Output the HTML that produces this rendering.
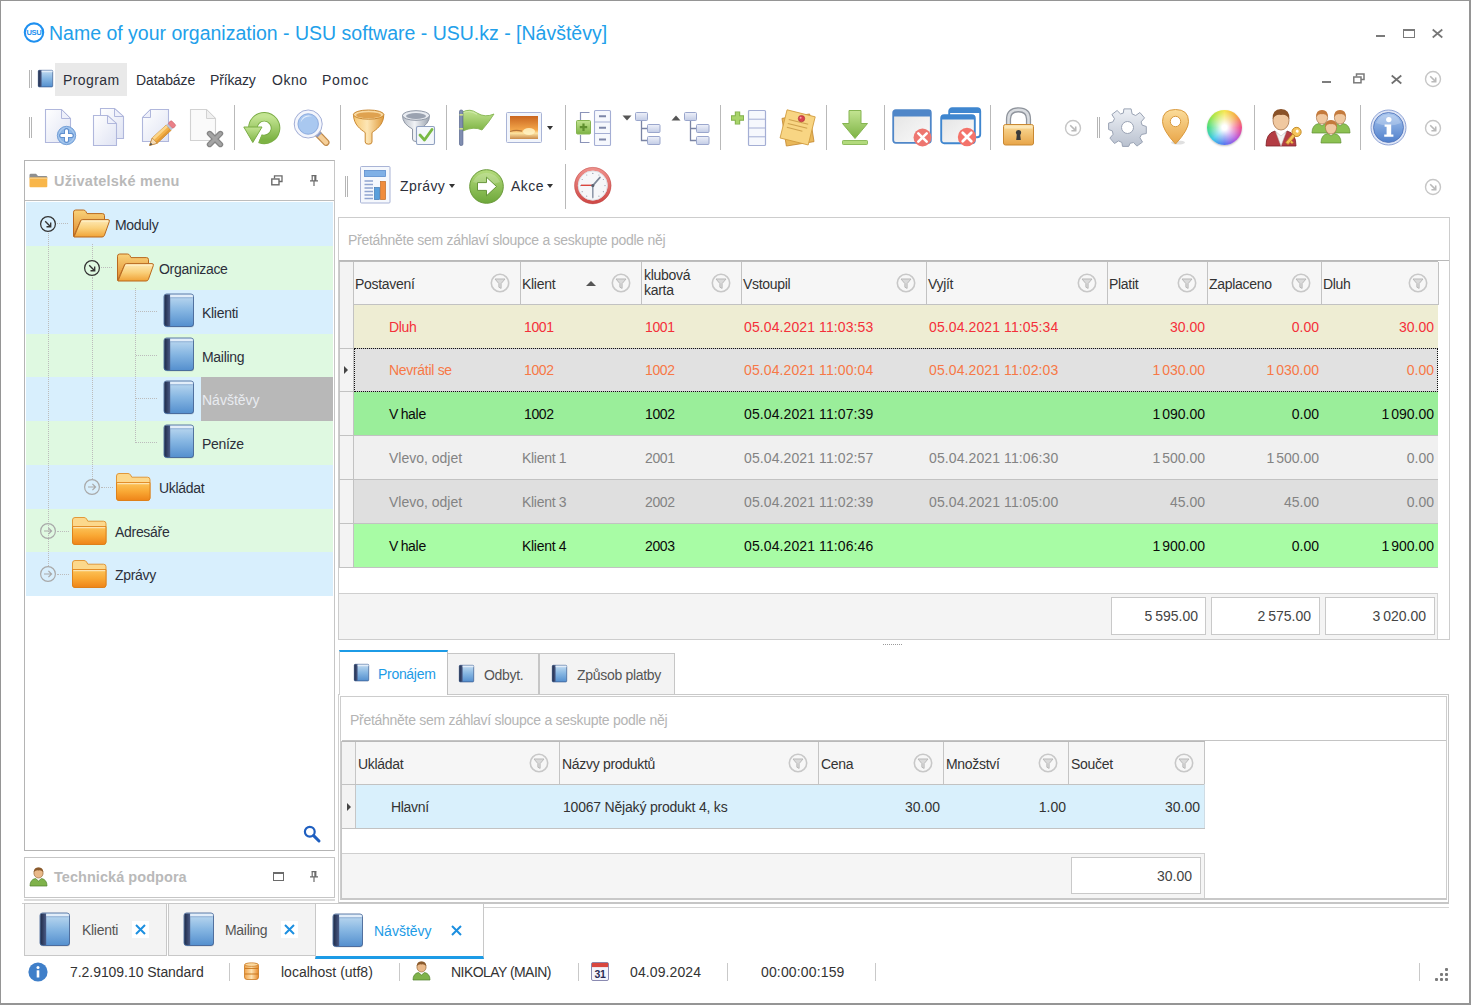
<!DOCTYPE html>
<html><head><meta charset="utf-8"><title>USU</title>
<style>
*{box-sizing:border-box;margin:0;padding:0}
html,body{width:1471px;height:1005px;overflow:hidden;background:#fff}
body{font-family:"Liberation Sans",sans-serif;font-size:14px;color:#2c2f3a;position:relative;letter-spacing:-0.3px}
.a{position:absolute}
.t{position:absolute;white-space:nowrap;line-height:16px;height:16px}
.n{letter-spacing:0}
.r{text-align:right}
.box{position:absolute;border:1px solid #c4c4c4}
.vsep{position:absolute;width:1px;background:#b9b9b9}
.grip{position:absolute;width:3px;border-left:1px solid #b5b5b5;border-right:1px solid #b5b5b5}
svg{position:absolute;overflow:visible}
.hd{position:absolute;background:#f6f6f6;border-right:1px solid #c8c8c8}
.gray{color:#838383}.red{color:#f4303a}.org{color:#f77846}.blk{color:#0a0a0a}
.dv{position:absolute;width:0;border-left:1px dotted #bcbcbc}
.dh{position:absolute;height:0;border-top:1px dotted #bcbcbc}
</style></head><body>
<svg width="0" height="0" style="left:0;top:0">
<defs>
<linearGradient id="gBookC" x1="0" y1="0" x2="0" y2="1"><stop offset="0" stop-color="#c2dcf1"/><stop offset="0.5" stop-color="#86b6e2"/><stop offset="1" stop-color="#548fce"/></linearGradient>
<linearGradient id="gBookS" x1="0" y1="0" x2="1" y2="0"><stop offset="0" stop-color="#1f2b49"/><stop offset="1" stop-color="#4a5b86"/></linearGradient>
<linearGradient id="gFoldB" x1="0" y1="0" x2="0" y2="1"><stop offset="0" stop-color="#f9d27a"/><stop offset="1" stop-color="#e08a2c"/></linearGradient>
<linearGradient id="gFoldF" x1="0" y1="0" x2="0" y2="1"><stop offset="0" stop-color="#feeab8"/><stop offset="0.5" stop-color="#fad07a"/><stop offset="1" stop-color="#f0a236"/></linearGradient>
<linearGradient id="gFoldC" x1="0" y1="0" x2="0" y2="1"><stop offset="0" stop-color="#fcc45a"/><stop offset="0.5" stop-color="#f9a834"/><stop offset="1" stop-color="#ee8418"/></linearGradient>
<linearGradient id="gPage" x1="0" y1="0" x2="1" y2="1"><stop offset="0" stop-color="#ffffff"/><stop offset="1" stop-color="#dfe3f3"/></linearGradient>
<linearGradient id="gGreen" x1="0" y1="0" x2="0" y2="1"><stop offset="0" stop-color="#b5dc7c"/><stop offset="1" stop-color="#6da73a"/></linearGradient>
<linearGradient id="gGold" x1="0" y1="0" x2="1" y2="0"><stop offset="0" stop-color="#f7c873"/><stop offset="0.45" stop-color="#fde6b5"/><stop offset="1" stop-color="#e09a3a"/></linearGradient>
<linearGradient id="gSilver" x1="0" y1="0" x2="1" y2="0"><stop offset="0" stop-color="#b8bec8"/><stop offset="0.45" stop-color="#f1f3f6"/><stop offset="1" stop-color="#9aa2ae"/></linearGradient>
<linearGradient id="gBlueBall" x1="0" y1="0" x2="0" y2="1"><stop offset="0" stop-color="#a9c6ee"/><stop offset="1" stop-color="#4f7fcb"/></linearGradient>
<linearGradient id="gLock" x1="0" y1="0" x2="0" y2="1"><stop offset="0" stop-color="#fbdc9a"/><stop offset="1" stop-color="#e8a548"/></linearGradient>
<linearGradient id="gSunset" x1="0" y1="0" x2="0" y2="1"><stop offset="0" stop-color="#c9651f"/><stop offset="0.6" stop-color="#f3a64a"/><stop offset="0.75" stop-color="#fde3a0"/><stop offset="1" stop-color="#c98a4a"/></linearGradient>
<linearGradient id="gWin" x1="0" y1="0" x2="1" y2="1"><stop offset="0" stop-color="#e3e3e3"/><stop offset="1" stop-color="#fbfbfb"/></linearGradient>
<linearGradient id="gGear" x1="0" y1="0" x2="0" y2="1"><stop offset="0" stop-color="#eef1f6"/><stop offset="1" stop-color="#b9c1cf"/></linearGradient>
<linearGradient id="gRedRing" x1="0" y1="0" x2="0" y2="1"><stop offset="0" stop-color="#ee8f8a"/><stop offset="1" stop-color="#cf4a48"/></linearGradient>

<!-- book 30x33 -->
<g id="book">
 <rect x="1" y="1.5" width="29" height="32" rx="2.5" fill="#000" opacity="0.13"/>
 <rect x="0" y="0" width="29.5" height="32.5" rx="2.5" fill="url(#gBookC)" stroke="#3a5a8f" stroke-width="0.8"/>
 <path d="M2.5 0.4 H6.2 V32.1 H2.5 A2.1 2.1 0 0 1 0.4 30 V2.5 A2.1 2.1 0 0 1 2.5 0.4Z" fill="url(#gBookS)"/>
 <rect x="6.2" y="0.8" width="22.5" height="2.6" fill="#e9f1fa" opacity="0.85"/>
 <rect x="6.2" y="3.4" width="22.5" height="0.8" fill="#5f86b8" opacity="0.6"/>
</g>
<!-- small book 15x17 -->
<g id="sbook">
 <rect x="0.3" y="0.3" width="14.4" height="16.6" rx="0.8" fill="url(#gBookC)" stroke="#3a5a8f" stroke-width="0.7"/>
 <path d="M1.3 0.3 H3.6 V16.7 H1.3 A1 1 0 0 1 0.3 15.7 V1.3 A1 1 0 0 1 1.3 0.3Z" fill="url(#gBookS)"/>
 <rect x="3.6" y="0.6" width="11" height="1.6" fill="#e9f1fa" opacity="0.85"/>
</g>
<!-- open folder 38x29 -->
<g id="ofold">
 <path d="M1.5 27.5 V3.2 Q1.5 1 3.7 1 H11.5 Q13 1 13.8 2.4 L15 4.6 H30.5 Q32.5 4.6 32.5 6.6 V11 H9 L1.5 27.5Z" fill="url(#gFoldB)" stroke="#b9691f" stroke-width="1"/>
 <path d="M2 28 L8.6 12 Q9.2 10.6 10.8 10.6 H36 Q38 10.6 37.3 12.6 L32.4 26.4 Q31.8 28 30 28Z" fill="url(#gFoldF)" stroke="#b9691f" stroke-width="1"/>
 <path d="M9.5 12.2 H36" stroke="#fff3d0" stroke-width="1" opacity="0.8" fill="none"/>
</g>
<!-- closed folder 35x28 -->
<g id="cfold">
 <path d="M0.5 25 V3 Q0.5 0.5 3 0.5 H12 Q13.8 0.5 14.6 2 L15.8 4.2 H31.5 Q34 4.2 34 6.7 V25 Q34 27.5 31.5 27.5 H3 Q0.5 27.5 0.5 25Z" fill="#fcd88c" stroke="#e0902a" stroke-width="0.9"/>
 <path d="M0.5 9.6 H34 V25 Q34 27.5 31.5 27.5 H3 Q0.5 27.5 0.5 25Z" fill="url(#gFoldC)" stroke="#dd7f18" stroke-width="0.9"/>
 <path d="M1.3 10.6 H33.2" stroke="#fee6b4" stroke-width="1.1" opacity="0.95"/>
</g>
<!-- expand circle (arrow down-right) r=8 -->
<g id="exOpen" fill="none" stroke="#333" stroke-width="1.25">
 <circle cx="0" cy="0" r="7.4"/>
 <path d="M-2.8 -2.8 L2.4 2.4 M2.7 -1.5 V2.7 H-1.5" stroke-width="1.35"/>
</g>
<g id="exClosed" fill="none" stroke="#a9a9a9" stroke-width="1.2">
 <circle cx="0" cy="0" r="7.4"/>
 <path d="M-4 0 H3.4 M0.4 -3.2 L3.6 0 L0.4 3.2"/>
</g>
<!-- filter button r=8.5 -->
<g id="filt">
 <circle cx="0" cy="0" r="8.7" fill="#f7f7f7" stroke="#c8c8c8" stroke-width="1.6"/>
 <path d="M-5 -4 H5 L1.1 0.6 V5.4 L-1.1 4.2 V0.6Z" fill="#dadada" stroke="#b9b9b9" stroke-width="1" stroke-linejoin="round"/>
</g>
<!-- overflow circle arrow -->
<g id="ovf" fill="none" stroke="#c6c6c6" stroke-width="1.4">
 <circle cx="0" cy="0" r="7.5"/>
 <path d="M-2.8 -2.8 L2.4 2.4 M2.7 -1.6 V2.7 H-1.6" stroke="#bababa" stroke-width="1.6"/>
</g>
</defs></svg>
<!-- window frame -->
<div class="a" style="left:0;top:0;width:1471px;height:1005px;border:1px solid #959595;border-right-width:2px;border-bottom-width:2px"></div>

<!-- TITLE -->
<svg style="left:23px;top:22px" width="22" height="22" viewBox="0 0 22 22">
 <circle cx="11" cy="10.6" r="9.2" fill="#fff" stroke="#1e90f0" stroke-width="2.1"/>
 <text x="11" y="13.4" text-anchor="middle" font-family="Liberation Sans" font-weight="bold" font-size="7.6" fill="#1e90f0" letter-spacing="-0.3">USU</text>
</svg>
<div id="title" class="t n" style="left:49px;top:21px;font-size:19.5px;line-height:24px;height:24px;color:#22a0ea">Name of your organization - USU software - USU.kz - [Návštěvy]</div>
<!-- window controls -->
<div class="a" style="left:1376px;top:35px;width:9px;height:2px;background:#7a7a7a"></div>
<div class="a" style="left:1403px;top:29px;width:12px;height:9px;border:1px solid #7a7a7a;border-top-width:2px"></div>
<svg style="left:1432px;top:29px" width="11" height="9"><path d="M0.7 0.5 L10.3 8.5 M10.3 0.5 L0.7 8.5" stroke="#777" stroke-width="1.7"/></svg>

<!-- MENU -->
<div class="grip" style="left:29px;top:70px;height:18px"></div>
<svg style="left:38px;top:70px" width="16" height="18"><use href="#sbook"/></svg>
<div class="a" style="left:55px;top:63px;width:72px;height:33px;background:#e9e9e9"></div>
<div class="t" style="left:63px;top:72px;letter-spacing:0.4px">Program</div>
<div class="t" style="left:136px;top:72px;letter-spacing:-0.1px">Databáze</div>
<div class="t" style="left:210px;top:72px;letter-spacing:-0.15px">Příkazy</div>
<div class="t" style="left:272px;top:72px;letter-spacing:0.5px">Okno</div>
<div class="t" style="left:322px;top:72px;letter-spacing:0.75px">Pomoc</div>
<!-- mdi controls -->
<div class="a" style="left:1322px;top:81px;width:9px;height:2px;background:#7d7d7d"></div>
<svg style="left:1353px;top:73px" width="12" height="12" fill="none" stroke="#7a7a7a" stroke-width="1.5"><path d="M3.5 3.5 V0.9 H11 V6.5 H8"/><rect x="0.8" y="4" width="7.2" height="5.8" stroke-width="1.5"/></svg>
<svg style="left:1391px;top:75px" width="11" height="9"><path d="M0.7 0.5 L10.3 8.5 M10.3 0.5 L0.7 8.5" stroke="#707070" stroke-width="1.7"/></svg>
<svg style="left:1433px;top:79px" width="1" height="1"><use href="#ovf"/></svg>
<svg style="left:1433px;top:128px" width="1" height="1"><use href="#ovf"/></svg>
<svg style="left:1433px;top:187px" width="1" height="1"><use href="#ovf"/></svg>
<svg style="left:1073px;top:128px" width="1" height="1"><use href="#ovf"/></svg>

<!-- TOOLBAR 1 separators -->
<div class="grip" style="left:29px;top:117px;height:21px"></div>
<div class="vsep" style="left:234px;top:105px;height:45px"></div>
<div class="vsep" style="left:340px;top:105px;height:45px"></div>
<div class="vsep" style="left:446px;top:105px;height:45px"></div>
<div class="vsep" style="left:565px;top:105px;height:45px"></div>
<div class="vsep" style="left:720px;top:105px;height:45px"></div>
<div class="vsep" style="left:826px;top:105px;height:45px"></div>
<div class="vsep" style="left:884px;top:105px;height:45px"></div>
<div class="vsep" style="left:990px;top:105px;height:45px"></div>
<div class="grip" style="left:1097px;top:117px;height:21px"></div>
<div class="vsep" style="left:1254px;top:105px;height:45px"></div>
<div class="vsep" style="left:1360px;top:105px;height:45px"></div>

<!-- TOOLBAR 2 -->
<div class="grip" style="left:345px;top:176px;height:21px"></div>
<div class="t" style="left:400px;top:178px;letter-spacing:0.4px">Zprávy</div>
<div class="a" style="left:449px;top:184px;border:3.5px solid transparent;border-top:4px solid #333;border-bottom:0"></div>
<div class="t" style="left:511px;top:178px;letter-spacing:0.5px">Akce</div>
<div class="a" style="left:547px;top:184px;border:3.5px solid transparent;border-top:4px solid #333;border-bottom:0"></div>
<div class="vsep" style="left:565px;top:164px;height:45px"></div>
<!-- LEFT PANEL -->
<div class="box" style="left:24px;top:160px;width:311px;height:691px;border-color:#b4b4b4;border-right-color:#c6c6c6"></div>
<div class="a" style="left:25px;top:200px;width:309px;height:1px;background:#bdbdbd"></div>
<svg style="left:29px;top:173px" width="19" height="15"><path d="M0.5 2.2 Q0.5 0.8 1.9 0.8 H7 L9 3 H17 Q18.3 3 18.3 4.3 V5 H0.5Z" fill="#8f8f8f"/><rect x="0.5" y="4.6" width="17.8" height="9.6" rx="1" fill="#f8b64a"/><rect x="0.5" y="4.6" width="17.8" height="1.2" fill="#fbd28a"/></svg>
<div class="t" style="left:54px;top:173px;font-weight:bold;font-size:14.5px;color:#b9b9b9;letter-spacing:0.25px">Uživatelské menu</div>
<svg style="left:271px;top:175px" width="12" height="12" fill="none" stroke="#6b6b6b" stroke-width="1.3"><path d="M3.5 3.5 V0.9 H11 V6.5 H8"/><rect x="0.8" y="4" width="7.2" height="5.8" stroke-width="1.4"/></svg>
<svg style="left:309px;top:175px" width="10" height="12"><path d="M2.5 0.6 H7.5 M3.2 0.6 V5.6 M6.8 0.6 V5.6 M5.9 0.6 V5.6 M1 5.9 H9 M5 6 V11" fill="none" stroke="#6b6b6b" stroke-width="1.2"/></svg>
<div class="a" style="left:26px;top:202px;width:307px;height:44px;background:#d8effd"></div>
<div class="a" style="left:26px;top:246px;width:307px;height:44px;background:#dff9e1"></div>
<div class="a" style="left:26px;top:290px;width:307px;height:44px;background:#d8effd"></div>
<div class="a" style="left:26px;top:334px;width:307px;height:43px;background:#dff9e1"></div>
<div class="a" style="left:26px;top:377px;width:307px;height:44px;background:#d8effd"></div>
<div class="a" style="left:26px;top:421px;width:307px;height:44px;background:#dff9e1"></div>
<div class="a" style="left:26px;top:465px;width:307px;height:44px;background:#d8effd"></div>
<div class="a" style="left:26px;top:509px;width:307px;height:43px;background:#dff9e1"></div>
<div class="a" style="left:26px;top:552px;width:307px;height:44px;background:#d8effd"></div>
<div class="dv" style="left:48px;top:233px;height:333px"></div>
<div class="dv" style="left:92px;top:277px;height:202px"></div>
<div class="dv" style="left:135px;top:288px;height:155px"></div>
<div class="dv" style="left:92px;top:244px;height:15px"></div>
<div class="dh" style="left:136px;top:311px;width:21px"></div>
<div class="dh" style="left:136px;top:355px;width:21px"></div>
<div class="dh" style="left:136px;top:398px;width:21px"></div>
<div class="dh" style="left:136px;top:442px;width:21px"></div>
<div class="dh" style="left:57px;top:223px;width:11px"></div>
<div class="dh" style="left:101px;top:267px;width:11px"></div>
<div class="dh" style="left:101px;top:487px;width:12px"></div>
<div class="dh" style="left:57px;top:531px;width:12px"></div>
<div class="dh" style="left:57px;top:574px;width:12px"></div>
<svg style="left:48px;top:224px" width="1" height="1"><use href="#exOpen"/></svg>
<svg style="left:72px;top:209px" width="38" height="29"><use href="#ofold"/></svg>
<div class="t" style="left:115px;top:217px">Moduly</div>
<svg style="left:92px;top:268px" width="1" height="1"><use href="#exOpen"/></svg>
<svg style="left:116px;top:253px" width="38" height="29"><use href="#ofold"/></svg>
<div class="t" style="left:159px;top:261px">Organizace</div>
<div class="t" style="left:202px;top:305px">Klienti</div>
<svg style="left:164px;top:294px" width="31" height="34"><use href="#book"/></svg>
<div class="t" style="left:202px;top:349px">Mailing</div>
<svg style="left:164px;top:338px" width="31" height="34"><use href="#book"/></svg>
<div class="a" style="left:201px;top:377px;width:132px;height:44px;background:#b8b8b8"></div>
<div class="t" style="left:202px;top:392px;color:#e8ebf0;letter-spacing:0">Návštěvy</div>
<svg style="left:164px;top:381px" width="31" height="34"><use href="#book"/></svg>
<div class="t" style="left:202px;top:436px">Peníze</div>
<svg style="left:164px;top:425px" width="31" height="34"><use href="#book"/></svg>
<svg style="left:92px;top:487px" width="1" height="1"><use href="#exClosed"/></svg>
<svg style="left:116px;top:473px" width="35" height="28"><use href="#cfold"/></svg>
<div class="t" style="left:159px;top:480px">Ukládat</div>
<svg style="left:48px;top:531px" width="1" height="1"><use href="#exClosed"/></svg>
<svg style="left:72px;top:517px" width="35" height="28"><use href="#cfold"/></svg>
<div class="t" style="left:115px;top:524px">Adresáře</div>
<svg style="left:48px;top:574px" width="1" height="1"><use href="#exClosed"/></svg>
<svg style="left:72px;top:560px" width="35" height="28"><use href="#cfold"/></svg>
<div class="t" style="left:115px;top:567px">Zprávy</div>
<svg style="left:303px;top:825px" width="18" height="18"><circle cx="6.8" cy="6.8" r="4.9" fill="none" stroke="#1f5fc0" stroke-width="2.2"/><path d="M10.6 10.6 L16 16" stroke="#1f5fc0" stroke-width="3" stroke-linecap="round"/></svg>
<div class="box" style="left:24px;top:857px;width:311px;height:41px;border-color:#c6c6c6"></div>
<div class="a" style="left:24px;top:899px;width:311px;height:2px;background:#dcdcdc"></div>
<svg style="left:29px;top:867px" width="19" height="20"><ellipse cx="9.5" cy="6" rx="4.6" ry="5" fill="#e9b98a" stroke="#9a6a3a" stroke-width="0.7"/><path d="M4.7 5 Q5 0.6 9.5 0.6 Q14 0.6 14.3 5 Q12 2.8 9.5 3.4 Q7 2.8 4.7 5Z" fill="#8a5a2c"/><path d="M1 19 Q1 12.5 6.5 11.5 L9.5 14 L12.5 11.5 Q18 12.5 18 19Z" fill="#7fb24a" stroke="#4f7f2a" stroke-width="0.7"/></svg>
<div class="t" style="left:54px;top:869px;font-weight:bold;font-size:14.5px;color:#b9b9b9;letter-spacing:0.05px">Technická podpora</div>
<div class="a" style="left:273px;top:872px;width:11px;height:9px;border:1px solid #6b6b6b;border-top-width:2px"></div>
<svg style="left:309px;top:871px" width="10" height="12"><path d="M2.5 0.6 H7.5 M3.2 0.6 V5.6 M6.8 0.6 V5.6 M5.9 0.6 V5.6 M1 5.9 H9 M5 6 V11" fill="none" stroke="#6b6b6b" stroke-width="1.2"/></svg>
<!-- MAIN GRID -->
<div class="box" style="left:338px;top:217px;width:1112px;height:423px;border-color:#cdcdcd"></div>
<div class="t" style="left:348px;top:232px;color:#b4b4b4;letter-spacing:-0.28px">Přetáhněte sem záhlaví sloupce a seskupte podle něj</div>
<div class="a" style="left:339px;top:260px;width:1110px;height:1px;background:#b9b9b9"></div>
<div class="a" style="left:339px;top:261px;width:1099px;height:1px;background:#bdbdbd"></div>
<div class="a" style="left:339px;top:262px;width:1100px;height:43px;background:#f6f6f6;border-bottom:1px solid #c2c2c2"></div>
<div class="a" style="left:340px;top:262px;width:14px;height:305px;background:#f3f3f3;border-right:1px solid #c2c2c2"></div>
<div class="a" style="left:339px;top:262px;width:1px;height:305px;background:#c6c6c6"></div>
<div class="a" style="left:520px;top:262px;width:1px;height:42px;background:#c2c2c2"></div>
<div class="t" style="left:355px;top:276px;color:#333">Postavení</div>
<svg style="left:500px;top:283px" width="1" height="1"><use href="#filt"/></svg>
<div class="a" style="left:641px;top:262px;width:1px;height:42px;background:#c2c2c2"></div>
<div class="t" style="left:522px;top:276px;color:#333">Klient</div>
<svg style="left:621px;top:283px" width="1" height="1"><use href="#filt"/></svg>
<div class="a" style="left:741px;top:262px;width:1px;height:42px;background:#c2c2c2"></div>
<div class="t" style="left:644px;top:268px;line-height:15px;height:30px;color:#333">klubová<br>karta</div>
<svg style="left:721px;top:283px" width="1" height="1"><use href="#filt"/></svg>
<div class="a" style="left:926px;top:262px;width:1px;height:42px;background:#c2c2c2"></div>
<div class="t" style="left:743px;top:276px;color:#333">Vstoupil</div>
<svg style="left:906px;top:283px" width="1" height="1"><use href="#filt"/></svg>
<div class="a" style="left:1107px;top:262px;width:1px;height:42px;background:#c2c2c2"></div>
<div class="t" style="left:928px;top:276px;color:#333">Vyjít</div>
<svg style="left:1087px;top:283px" width="1" height="1"><use href="#filt"/></svg>
<div class="a" style="left:1207px;top:262px;width:1px;height:42px;background:#c2c2c2"></div>
<div class="t" style="left:1109px;top:276px;color:#333">Platit</div>
<svg style="left:1187px;top:283px" width="1" height="1"><use href="#filt"/></svg>
<div class="a" style="left:1321px;top:262px;width:1px;height:42px;background:#c2c2c2"></div>
<div class="t" style="left:1209px;top:276px;color:#333">Zaplaceno</div>
<svg style="left:1301px;top:283px" width="1" height="1"><use href="#filt"/></svg>
<div class="a" style="left:1438px;top:262px;width:1px;height:42px;background:#c2c2c2"></div>
<div class="t" style="left:1323px;top:276px;color:#333">Dluh</div>
<svg style="left:1418px;top:283px" width="1" height="1"><use href="#filt"/></svg>
<div class="a" style="left:586px;top:281px;border:5.5px solid transparent;border-bottom:5px solid #555;border-top:0"></div>
<div class="a" style="left:354px;top:305px;width:1084px;height:43px;background:#eeedd3"></div>
<div class="a" style="left:339px;top:348px;width:1099px;height:1px;background:#c2c2c2"></div>
<div class="t red" style="left:389px;top:319px;">Dluh</div>
<div class="t red" style="left:524px;top:319px;letter-spacing:-0.4px">1001</div>
<div class="t red" style="left:645px;top:319px;letter-spacing:-0.4px">1001</div>
<div class="t n red" style="left:744px;top:319px;letter-spacing:0.1px">05.04.2021 11:03:53</div>
<div class="t n red" style="left:929px;top:319px;letter-spacing:0.1px">05.04.2021 11:05:34</div>
<div class="t n r red" style="left:1105px;width:100px;top:319px;word-spacing:-2px">30.00</div>
<div class="t n r red" style="left:1219px;width:100px;top:319px;word-spacing:-2px">0.00</div>
<div class="t n r red" style="left:1334px;width:100px;top:319px;word-spacing:-2px">30.00</div>
<div class="a" style="left:354px;top:349px;width:1084px;height:42px;background:#e1e1e1"></div>
<div class="a" style="left:339px;top:391px;width:1099px;height:1px;background:#c2c2c2"></div>
<div class="t org" style="left:389px;top:362px;">Nevrátil se</div>
<div class="t org" style="left:524px;top:362px;letter-spacing:-0.4px">1002</div>
<div class="t org" style="left:645px;top:362px;letter-spacing:-0.4px">1002</div>
<div class="t n org" style="left:744px;top:362px;letter-spacing:0.1px">05.04.2021 11:00:04</div>
<div class="t n org" style="left:929px;top:362px;letter-spacing:0.1px">05.04.2021 11:02:03</div>
<div class="t n r org" style="left:1105px;width:100px;top:362px;word-spacing:-2px">1 030.00</div>
<div class="t n r org" style="left:1219px;width:100px;top:362px;word-spacing:-2px">1 030.00</div>
<div class="t n r org" style="left:1334px;width:100px;top:362px;word-spacing:-2px">0.00</div>
<div class="a" style="left:354px;top:392px;width:1084px;height:43px;background:#9aee9a"></div>
<div class="a" style="left:339px;top:435px;width:1099px;height:1px;background:#c2c2c2"></div>
<div class="t blk" style="left:389px;top:406px;word-spacing:-1px;">V hale</div>
<div class="t blk" style="left:524px;top:406px;letter-spacing:-0.4px">1002</div>
<div class="t blk" style="left:645px;top:406px;letter-spacing:-0.4px">1002</div>
<div class="t n blk" style="left:744px;top:406px;letter-spacing:0.1px">05.04.2021 11:07:39</div>
<div class="t n r blk" style="left:1105px;width:100px;top:406px;word-spacing:-2px">1 090.00</div>
<div class="t n r blk" style="left:1219px;width:100px;top:406px;word-spacing:-2px">0.00</div>
<div class="t n r blk" style="left:1334px;width:100px;top:406px;word-spacing:-2px">1 090.00</div>
<div class="a" style="left:354px;top:436px;width:1084px;height:43px;background:#f0f0f0"></div>
<div class="a" style="left:339px;top:479px;width:1099px;height:1px;background:#c2c2c2"></div>
<div class="t gray" style="left:389px;top:450px;letter-spacing:0;">Vlevo, odjet</div>
<div class="t gray" style="left:522px;top:450px;letter-spacing:-0.3px">Klient 1</div>
<div class="t gray" style="left:645px;top:450px;letter-spacing:-0.4px">2001</div>
<div class="t n gray" style="left:744px;top:450px;letter-spacing:0.1px">05.04.2021 11:02:57</div>
<div class="t n gray" style="left:929px;top:450px;letter-spacing:0.1px">05.04.2021 11:06:30</div>
<div class="t n r gray" style="left:1105px;width:100px;top:450px;word-spacing:-2px">1 500.00</div>
<div class="t n r gray" style="left:1219px;width:100px;top:450px;word-spacing:-2px">1 500.00</div>
<div class="t n r gray" style="left:1334px;width:100px;top:450px;word-spacing:-2px">0.00</div>
<div class="a" style="left:354px;top:480px;width:1084px;height:43px;background:#dfdfdf"></div>
<div class="a" style="left:339px;top:523px;width:1099px;height:1px;background:#c2c2c2"></div>
<div class="t gray" style="left:389px;top:494px;letter-spacing:0;">Vlevo, odjet</div>
<div class="t gray" style="left:522px;top:494px;letter-spacing:-0.3px">Klient 3</div>
<div class="t gray" style="left:645px;top:494px;letter-spacing:-0.4px">2002</div>
<div class="t n gray" style="left:744px;top:494px;letter-spacing:0.1px">05.04.2021 11:02:39</div>
<div class="t n gray" style="left:929px;top:494px;letter-spacing:0.1px">05.04.2021 11:05:00</div>
<div class="t n r gray" style="left:1105px;width:100px;top:494px;word-spacing:-2px">45.00</div>
<div class="t n r gray" style="left:1219px;width:100px;top:494px;word-spacing:-2px">45.00</div>
<div class="t n r gray" style="left:1334px;width:100px;top:494px;word-spacing:-2px">0.00</div>
<div class="a" style="left:354px;top:524px;width:1084px;height:43px;background:#a8fca5"></div>
<div class="a" style="left:339px;top:567px;width:1099px;height:1px;background:#c2c2c2"></div>
<div class="t blk" style="left:389px;top:538px;word-spacing:-1px;">V hale</div>
<div class="t blk" style="left:522px;top:538px;letter-spacing:-0.3px">Klient 4</div>
<div class="t blk" style="left:645px;top:538px;letter-spacing:-0.4px">2003</div>
<div class="t n blk" style="left:744px;top:538px;letter-spacing:0.1px">05.04.2021 11:06:46</div>
<div class="t n r blk" style="left:1105px;width:100px;top:538px;word-spacing:-2px">1 900.00</div>
<div class="t n r blk" style="left:1219px;width:100px;top:538px;word-spacing:-2px">0.00</div>
<div class="t n r blk" style="left:1334px;width:100px;top:538px;word-spacing:-2px">1 900.00</div>
<div class="a" style="left:354px;top:348px;width:1084px;height:44px;border:1px dotted #111"></div>
<div class="a" style="left:344px;top:366px;border:4.5px solid transparent;border-left:4.5px solid #444;border-right:0"></div>
<div class="a" style="left:339px;top:593px;width:1099px;height:46px;background:#f4f4f4;border-top:1px solid #cfcfcf;border-right:1px solid #d6d6d6"></div>
<div class="a" style="left:1111px;top:597px;width:95px;height:38px;background:#fff;border:1px solid #c9c9c9"></div>
<div class="t n r" style="left:1098px;width:100px;top:608px;color:#444;word-spacing:-1px">5 595.00</div>
<div class="a" style="left:1211px;top:597px;width:109px;height:38px;background:#fff;border:1px solid #c9c9c9"></div>
<div class="t n r" style="left:1211px;width:100px;top:608px;color:#444;word-spacing:-1px">2 575.00</div>
<div class="a" style="left:1325px;top:597px;width:110px;height:38px;background:#fff;border:1px solid #c9c9c9"></div>
<div class="t n r" style="left:1326px;width:100px;top:608px;color:#444;word-spacing:-1px">3 020.00</div>
<div class="a" style="left:883px;top:644px;width:19px;height:0;border-top:1px dotted #9a9a9a"></div>
<!-- DETAIL TABS -->
<div class="a" style="left:447px;top:653px;width:92px;height:41px;background:#f3f3f3;border:1px solid #c6c6c6;border-bottom:0"></div>
<svg style="left:459px;top:665px" width="16" height="18"><use href="#sbook"/></svg>
<div class="t" style="left:484px;top:667px;color:#555">Odbyt.</div>
<div class="a" style="left:539px;top:653px;width:136px;height:41px;background:#f3f3f3;border:1px solid #c6c6c6;border-bottom:0"></div>
<svg style="left:552px;top:665px" width="16" height="18"><use href="#sbook"/></svg>
<div class="t" style="left:577px;top:667px;color:#555">Způsob platby</div>
<div class="a" style="left:339px;top:650px;width:109px;height:45px;background:#fff;border-left:1px solid #d0d0d0;border-right:1px solid #c0c0c0;border-top:2px solid #1c9be6"></div>
<svg style="left:354px;top:664px" width="16" height="18"><use href="#sbook"/></svg>
<div class="t" style="left:378px;top:666px;color:#1c9be6">Pronájem</div>
<div class="a" style="left:338px;top:694px;width:1111px;height:210px;border:1px solid #c6c6c6;border-top:0;border-left:0;border-bottom-width:2px"></div>
<div class="a" style="left:448px;top:694px;width:1001px;height:1px;background:#c9c9c9"></div>
<div class="a" style="left:338px;top:694px;width:1px;height:209px;background:#d0d0d0"></div>
<div class="box" style="left:340px;top:696px;width:1107px;height:204px;border-color:#cdcdcd;border-bottom:2px solid #c8c8c8"></div>
<div class="t" style="left:350px;top:712px;color:#b4b4b4;letter-spacing:-0.28px">Přetáhněte sem záhlaví sloupce a seskupte podle něj</div>
<div class="a" style="left:342px;top:740px;width:1104px;height:1px;background:#c4c4c4"></div>
<div class="a" style="left:342px;top:741px;width:863px;height:1px;background:#b9b9b9"></div>
<div class="a" style="left:342px;top:742px;width:863px;height:43px;background:#f6f6f6;border-bottom:1px solid #c2c2c2"></div>
<div class="a" style="left:342px;top:742px;width:14px;height:87px;background:#f3f3f3;border-right:1px solid #c6c6c6"></div>
<div class="a" style="left:342px;top:784px;width:14px;height:1px;background:#c2c2c2"></div>
<div class="a" style="left:559px;top:742px;width:1px;height:42px;background:#c4c4c4"></div>
<div class="t" style="left:358px;top:756px;color:#333">Ukládat</div>
<svg style="left:539px;top:763px" width="1" height="1"><use href="#filt"/></svg>
<div class="a" style="left:818px;top:742px;width:1px;height:42px;background:#c4c4c4"></div>
<div class="t" style="left:562px;top:756px;color:#333">Názvy produktů</div>
<svg style="left:798px;top:763px" width="1" height="1"><use href="#filt"/></svg>
<div class="a" style="left:943px;top:742px;width:1px;height:42px;background:#c4c4c4"></div>
<div class="t" style="left:821px;top:756px;color:#333">Cena</div>
<svg style="left:923px;top:763px" width="1" height="1"><use href="#filt"/></svg>
<div class="a" style="left:1068px;top:742px;width:1px;height:42px;background:#c4c4c4"></div>
<div class="t" style="left:946px;top:756px;color:#333">Množství</div>
<svg style="left:1048px;top:763px" width="1" height="1"><use href="#filt"/></svg>
<div class="a" style="left:1204px;top:742px;width:1px;height:42px;background:#c4c4c4"></div>
<div class="t" style="left:1071px;top:756px;color:#333">Součet</div>
<svg style="left:1184px;top:763px" width="1" height="1"><use href="#filt"/></svg>
<div class="a" style="left:356px;top:785px;width:849px;height:43px;background:#d9f0fc"></div>
<div class="a" style="left:342px;top:828px;width:863px;height:1px;background:#c2c2c2"></div>
<div class="a" style="left:1204px;top:784px;width:1px;height:44px;background:#cfdce4"></div>
<div class="a" style="left:347px;top:803px;border:4.5px solid transparent;border-left:4.5px solid #444;border-right:0"></div>
<div class="t" style="left:391px;top:799px;color:#333">Hlavní</div>
<div class="t" style="left:563px;top:799px;color:#333;letter-spacing:-0.2px">10067 Nějaký produkt 4, ks</div>
<div class="t n r" style="left:840px;width:100px;top:799px;color:#333">30.00</div>
<div class="t n r" style="left:966px;width:100px;top:799px;color:#333">1.00</div>
<div class="t n r" style="left:1100px;width:100px;top:799px;color:#333">30.00</div>
<div class="a" style="left:342px;top:853px;width:863px;height:45px;background:#f5f5f5;border-top:1px solid #cfcfcf;border-right:1px solid #d0d0d0"></div>
<div class="a" style="left:1071px;top:857px;width:130px;height:37px;background:#fff;border:1px solid #c9c9c9"></div>
<div class="t n r" style="left:1092px;width:100px;top:868px;color:#444">30.00</div>
<div class="a" style="left:341px;top:741px;width:1px;height:157px;background:#c6c6c6"></div>
<!-- BOTTOM TABS -->
<div class="a" style="left:22px;top:903px;width:318px;height:1px;background:#d0d0d0"></div>
<div class="a" style="left:24px;top:903px;width:143px;height:53px;background:#f3f3f3;border:1px solid #c8c8c8"></div>
<svg style="left:40px;top:913px" width="31" height="34"><use href="#book"/></svg>
<div class="t" style="left:82px;top:922px;color:#555">Klienti</div>
<div class="a" style="left:132px;top:921px;width:17px;height:17px;background:#fff"></div>
<svg style="left:135px;top:924px" width="11" height="11"><path d="M1 1 L10 10 M10 1 L1 10" stroke="#1c8fe0" stroke-width="2"/></svg>
<div class="a" style="left:168px;top:903px;width:148px;height:53px;background:#f3f3f3;border:1px solid #c8c8c8"></div>
<svg style="left:184px;top:913px" width="31" height="34"><use href="#book"/></svg>
<div class="t" style="left:225px;top:922px;color:#555">Mailing</div>
<div class="a" style="left:281px;top:921px;width:17px;height:17px;background:#fff"></div>
<svg style="left:284px;top:924px" width="11" height="11"><path d="M1 1 L10 10 M10 1 L1 10" stroke="#1c8fe0" stroke-width="2"/></svg>
<div class="a" style="left:315px;top:903px;width:169px;height:56px;background:#fff;border:1px solid #c8c8c8;border-bottom:3px solid #1c9be6"></div>
<svg style="left:333px;top:914px" width="31" height="34"><use href="#book"/></svg>
<div class="t" style="left:374px;top:923px;color:#1c9be6;letter-spacing:0">Návštěvy</div>
<svg style="left:451px;top:925px" width="11" height="11"><path d="M1 1 L10 10 M10 1 L1 10" stroke="#1c8fe0" stroke-width="2"/></svg>
<div class="a" style="left:484px;top:907px;width:965px;height:1px;background:#d4d4d4"></div>
<!-- STATUS BAR -->
<svg style="left:28px;top:962px" width="20" height="20"><circle cx="10" cy="10" r="9.6" fill="#3f7fc9"/><circle cx="10" cy="5.6" r="1.5" fill="#fff"/><rect x="8.7" y="8.3" width="2.6" height="7.2" fill="#fff"/></svg>
<div class="t n" style="left:70px;top:964px;color:#333;letter-spacing:-0.05px">7.2.9109.10 Standard</div>
<div class="a" style="left:229px;top:963px;width:1px;height:18px;background:#c9c9c9"></div>
<div class="a" style="left:399px;top:963px;width:1px;height:18px;background:#c9c9c9"></div>
<div class="a" style="left:578px;top:963px;width:1px;height:18px;background:#c9c9c9"></div>
<div class="a" style="left:727px;top:963px;width:1px;height:18px;background:#c9c9c9"></div>
<div class="a" style="left:875px;top:963px;width:1px;height:18px;background:#c9c9c9"></div>
<div class="a" style="left:1419px;top:963px;width:1px;height:18px;background:#c9c9c9"></div>
<svg style="left:244px;top:962px" width="15" height="19"><defs><linearGradient id="gdb" x1="0" y1="0" x2="1" y2="0"><stop offset="0" stop-color="#f2a24a"/><stop offset="0.5" stop-color="#fde2b0"/><stop offset="1" stop-color="#e88a2a"/></linearGradient></defs><rect x="0.5" y="1.5" width="14" height="16" rx="2.5" fill="url(#gdb)" stroke="#c9781f" stroke-width="0.8"/><path d="M0.8 6.4 H14.2 M0.8 12 H14.2" stroke="#c9781f" stroke-width="1"/><ellipse cx="7.5" cy="2.6" rx="6.6" ry="1.8" fill="#fbd9a0" stroke="#c9781f" stroke-width="0.7"/></svg>
<div class="t" style="left:281px;top:964px;color:#333;letter-spacing:0px">localhost (utf8)</div>
<svg style="left:412px;top:961px" width="19" height="20"><ellipse cx="9.5" cy="6" rx="4.6" ry="5" fill="#e9b98a" stroke="#9a6a3a" stroke-width="0.7"/><path d="M4.7 5 Q5 0.6 9.5 0.6 Q14 0.6 14.3 5 Q12 2.8 9.5 3.4 Q7 2.8 4.7 5Z" fill="#8a5a2c"/><path d="M1 19 Q1 12.5 6.5 11.5 L9.5 14 L12.5 11.5 Q18 12.5 18 19Z" fill="#7fb24a" stroke="#4f7f2a" stroke-width="0.7"/></svg>
<div class="t" style="left:451px;top:964px;color:#333;letter-spacing:-0.55px">NIKOLAY (MAIN)</div>
<svg style="left:591px;top:962px" width="18" height="19"><rect x="0.5" y="0.5" width="17" height="18" rx="1.5" fill="#f4f4fb" stroke="#7d7da8" stroke-width="0.9"/><rect x="0.9" y="0.9" width="16.2" height="4.2" fill="#d9463e"/><text x="9" y="16" text-anchor="middle" font-family="Liberation Sans" font-weight="bold" font-size="10.5" fill="#2b2b55" letter-spacing="-0.3">31</text></svg>
<div class="t n" style="left:630px;top:964px;color:#333;letter-spacing:0.1px">04.09.2024</div>
<div class="t n" style="left:761px;top:964px;color:#333;letter-spacing:0.15px">00:00:00:159</div>
<div class="a" style="left:1445px;top:968px;width:3px;height:3px;background:#7a7a7a;border-radius:1px"></div>
<div class="a" style="left:1440px;top:973px;width:3px;height:3px;background:#7a7a7a;border-radius:1px"></div>
<div class="a" style="left:1445px;top:973px;width:3px;height:3px;background:#7a7a7a;border-radius:1px"></div>
<div class="a" style="left:1435px;top:978px;width:3px;height:3px;background:#7a7a7a;border-radius:1px"></div>
<div class="a" style="left:1440px;top:978px;width:3px;height:3px;background:#7a7a7a;border-radius:1px"></div>
<div class="a" style="left:1445px;top:978px;width:3px;height:3px;background:#7a7a7a;border-radius:1px"></div>
<!-- TOOLBAR ICONS 1 -->
<!-- 1 new doc -->
<svg style="left:44px;top:108px" width="34" height="38">
 <path d="M1.5 1.5 H17.5 L26.5 10.5 V34.5 H1.5Z" fill="url(#gPage)" stroke="#b0b7dc" stroke-width="1.1"/>
 <path d="M17.5 1.5 V10.5 H26.5Z" fill="#eef0fa" stroke="#b0b7dc" stroke-width="1" stroke-linejoin="round"/>
 <circle cx="22.5" cy="27.5" r="9.2" fill="#8db6e6" stroke="#78a2d8" stroke-width="1"/>
 <circle cx="22.5" cy="27.5" r="7.6" fill="none" stroke="#a9c9ee" stroke-width="1.4"/>
 <path d="M22.5 22.6 V32.4 M17.6 27.5 H27.4" stroke="#5f8fcf" stroke-width="5" stroke-linecap="round"/>
 <path d="M22.5 22.8 V32.2 M17.8 27.5 H27.2" stroke="#fff" stroke-width="3" stroke-linecap="round"/>
</svg>
<!-- 2 copy -->
<svg style="left:92px;top:107px" width="34" height="40">
 <path d="M8.5 1.5 H22.5 L31.5 9.5 V31.5 H8.5Z" fill="url(#gPage)" stroke="#b0b7dc" stroke-width="1.1"/>
 <path d="M22.5 1.5 V9.5 H31.5Z" fill="#eef0fa" stroke="#b0b7dc" stroke-width="1" stroke-linejoin="round"/>
 <path d="M1.5 8.5 H15.5 L24.5 16.5 V38.5 H1.5Z" fill="url(#gPage)" stroke="#b0b7dc" stroke-width="1.1"/>
 <path d="M15.5 8.5 V16.5 H24.5Z" fill="#eef0fa" stroke="#b0b7dc" stroke-width="1" stroke-linejoin="round"/>
</svg>
<!-- 3 edit -->
<svg style="left:140px;top:108px" width="37" height="40">
 <path d="M10.5 1.5 H28.5 V33.5 H2.5 V9.5Z" fill="url(#gPage)" stroke="#b0b7dc" stroke-width="1.1"/>
 <path d="M10.5 1.5 V9.5 H2.5Z" fill="#eef0fa" stroke="#b0b7dc" stroke-width="1" stroke-linejoin="round"/>
 <g transform="translate(9.6,37.4) rotate(-43)">
  <path d="M0 0 L7 -3.6 H26 V3.6 H7Z" fill="#f3b24a" stroke="#b87824" stroke-width="0.7"/>
  <path d="M7 -3.6 H26 V-1 H7Z" fill="#fbd58a"/>
  <path d="M7 1.4 H26 V3.6 H7Z" fill="#e29a36"/>
  <path d="M0 0 L7 -3.6 V3.6Z" fill="#f5dcb8" stroke="#b87824" stroke-width="0.5"/>
  <path d="M0 0 L2.8 -1.4 V1.4Z" fill="#555"/>
  <rect x="26" y="-3.6" width="2.4" height="7.2" fill="#b9c3d6"/>
  <rect x="28.4" y="-3.6" width="4.6" height="7.2" rx="1.6" fill="#ea8088" stroke="#c45a64" stroke-width="0.5"/>
 </g>
</svg>
<!-- 4 delete -->
<svg style="left:189px;top:108px" width="36" height="40">
 <path d="M1.5 1.5 H17.5 L26.5 10.5 V32.5 H1.5Z" fill="#fafafa" stroke="#d2d2d2" stroke-width="1.1"/>
 <path d="M17.5 1.5 V10.5 H26.5Z" fill="#f0f0f0" stroke="#d2d2d2" stroke-width="1" stroke-linejoin="round"/>
 <path d="M20.6 25.6 L31.4 36.4 M31.4 25.6 L20.6 36.4" stroke="#858585" stroke-width="5.6" stroke-linecap="round"/>
 <path d="M20.6 25.6 L31.4 36.4 M31.4 25.6 L20.6 36.4" stroke="#a4a4a4" stroke-width="3" stroke-linecap="round"/>
</svg>
<!-- 5 refresh -->
<svg style="left:243px;top:108px" width="40" height="38" viewBox="0 0 40 38">
 <defs><linearGradient id="gRf" x1="0" y1="0" x2="0" y2="1"><stop offset="0" stop-color="#c3e492"/><stop offset="1" stop-color="#7db344"/></linearGradient></defs>
 <path d="M10 21.5 A11.3 11.3 0 1 1 17 30.6" fill="none" stroke="#7aac45" stroke-width="9.6" stroke-linecap="butt"/>
 <path d="M10 21.5 A11.3 11.3 0 1 1 17 30.6" fill="none" stroke="url(#gRf)" stroke-width="7.8" stroke-linecap="butt"/>
 <path d="M0.8 19 H19 L9.8 34.5Z" fill="url(#gRf)" stroke="#7aac45" stroke-width="1" stroke-linejoin="round"/>
</svg>
<!-- 6 magnifier -->
<svg style="left:293px;top:108px" width="38" height="40">
 <path d="M24 25 L33 34.4" stroke="#c08a4a" stroke-width="7" stroke-linecap="round"/>
 <path d="M24 25 L33 34.4" stroke="#f6cf98" stroke-width="4.6" stroke-linecap="round"/>
 <path d="M23 23.6 L26.6 27.4" stroke="#8f9cc0" stroke-width="6.4"/>
 <circle cx="15.2" cy="16" r="14" fill="#dfe6f5" stroke="#a3aed6" stroke-width="1"/>
 <circle cx="15.2" cy="16" r="12" fill="none" stroke="#f4f6fc" stroke-width="2.4"/>
 <circle cx="15.2" cy="16" r="10.2" fill="#a9c8f0" stroke="#8aa9de" stroke-width="0.9"/>
 <path d="M7.6 14.5 A8 8 0 0 1 19 8.4 A11 11 0 0 0 7.6 14.5Z" fill="#eef4fd" opacity="0.9"/>
</svg>
<!-- 7 funnel gold -->
<svg style="left:352px;top:109px" width="34" height="38">
 <path d="M1.5 5.5 C1.5 16 9 20.5 13.2 23.6 V33 Q13.2 35.2 16.6 35.2 Q20 35.2 20 33 V23.6 C24 20.5 31.8 16 31.8 5.5Z" fill="url(#gGold)" stroke="#c98832" stroke-width="1"/>
 <ellipse cx="16.6" cy="5.6" rx="15.2" ry="4.6" fill="#f9d9a0" stroke="#c98832" stroke-width="1"/>
 <ellipse cx="16.6" cy="6.2" rx="12.4" ry="3" fill="#dfa250"/>
</svg>
<!-- 8 funnel silver + check -->
<svg style="left:401px;top:109px" width="36" height="38">
 <path d="M1.5 6.5 Q1.5 15 11.5 20 V30 Q11.5 32.5 15 32.5 Q18.5 32.5 18.5 30 V20 Q28.5 15 28.5 6.5Z" fill="url(#gSilver)" stroke="#8e96a4" stroke-width="1"/>
 <ellipse cx="15" cy="6.5" rx="13.5" ry="4.8" fill="#e9ecf1" stroke="#8e96a4" stroke-width="1"/>
 <ellipse cx="15" cy="7" rx="10" ry="3" fill="#9aa2b0"/>
 <rect x="15.5" y="17.5" width="18" height="18" rx="1.5" fill="#f4f7fb" stroke="#8fa0c0" stroke-width="1.1"/>
 <path d="M19 26 L23.5 31 L31 20.5" fill="none" stroke="#78b944" stroke-width="2.8" stroke-linejoin="round" stroke-linecap="round"/>
</svg>
<!-- 9 flag -->
<svg style="left:458px;top:109px" width="38" height="38">
 <path d="M4.5 3 Q12 -1 19 4 Q27 9 36 5 Q31 13 24 21 Q16 17 4.5 22Z" fill="url(#gRf)" stroke="#86b552" stroke-width="0.9"/>
 <path d="M4.5 4 Q12 0.5 19 5.2" fill="none" stroke="#d5ecb0" stroke-width="1.2" opacity="0.8"/>
 <rect x="1.5" y="1" width="3.4" height="35.5" rx="1.5" fill="#7f8db0" stroke="#56648c" stroke-width="0.7"/>
 <rect x="1.5" y="5" width="3.4" height="1.6" fill="#cfe08a"/><rect x="1.5" y="19" width="3.4" height="1.6" fill="#cfe08a"/>
</svg>
<!-- 10 picture -->
<svg style="left:506px;top:112px" width="36" height="31">
 <rect x="0.5" y="0.5" width="35" height="30" rx="1" fill="#f2f5fb" stroke="#a9b4d6" stroke-width="1"/>
 <rect x="4" y="4" width="28" height="23" fill="url(#gSunset)"/>
 <ellipse cx="23" cy="19.5" rx="6" ry="3.4" fill="#fff3c4" opacity="0.85"/>
 <path d="M4 19.5 Q10 17.5 16 19.2" stroke="#9a5a2a" stroke-width="1.2" fill="none" opacity="0.7"/>
</svg>
<div class="a" style="left:547px;top:126px;border:3.5px solid transparent;border-top:4px solid #333;border-bottom:0"></div>
<!-- 11 expand list -->
<svg style="left:576px;top:109px" width="36" height="38">
 <path d="M13.5 3.5 H4.5 V11 M4.5 26 V33.5 H13.5" fill="none" stroke="#8a93b8" stroke-width="1.2"/>
 <rect x="18.5" y="1.5" width="16" height="35" rx="1" fill="#f6f8fd" stroke="#a4aed4" stroke-width="1.1"/>
 <path d="M18.5 13 H34.5 M18.5 24.5 H34.5" stroke="#a4aed4" stroke-width="1"/>
 <path d="M23 7.3 H30 M23 18.8 H30 M23 30.5 H30" stroke="#7d86a8" stroke-width="2"/>
 <rect x="0.5" y="11.5" width="14" height="13.5" rx="1" fill="url(#gRf)" stroke="#86b552" stroke-width="1"/>
 <path d="M7.5 14.5 V22 M3.8 18.2 H11.2" stroke="#5f8f2f" stroke-width="2.2"/>
</svg>
<svg width="0" height="0"><defs><linearGradient id="gTb" x1="0" y1="0" x2="0" y2="1"><stop offset="0" stop-color="#eef1f9"/><stop offset="1" stop-color="#c3cce6"/></linearGradient></defs></svg>
<!-- 12 tree down -->
<svg style="left:622px;top:112px" width="40" height="34">
 <path d="M0.5 3.5 H9.5 L5 8.5Z" fill="#555"/>
 <path d="M19.5 8 V28.5 H26 M19.5 16.5 H26" fill="none" stroke="#7a84a4" stroke-width="1.3"/>
 <rect x="13.5" y="0.5" width="12" height="8" rx="1" fill="url(#gTb)" stroke="#9aa6cc" stroke-width="1"/>
 <rect x="25.5" y="12.5" width="12.5" height="8" rx="1" fill="url(#gTb)" stroke="#9aa6cc" stroke-width="1"/>
 <rect x="25.5" y="24.5" width="12.5" height="8" rx="1" fill="url(#gTb)" stroke="#9aa6cc" stroke-width="1"/>
</svg>
<!-- 13 tree up -->
<svg style="left:671px;top:112px" width="40" height="34">
 <path d="M0.5 8.5 H9.5 L5 3.5Z" fill="#555"/>
 <path d="M19.5 8 V28.5 H26 M19.5 16.5 H26" fill="none" stroke="#7a84a4" stroke-width="1.3"/>
 <rect x="13.5" y="0.5" width="12" height="8" rx="1" fill="url(#gTb)" stroke="#9aa6cc" stroke-width="1"/>
 <rect x="25.5" y="12.5" width="12.5" height="8" rx="1" fill="url(#gTb)" stroke="#9aa6cc" stroke-width="1"/>
 <rect x="25.5" y="24.5" width="12.5" height="8" rx="1" fill="url(#gTb)" stroke="#9aa6cc" stroke-width="1"/>
</svg>
<!-- 14 add rows -->
<svg style="left:730px;top:109px" width="37" height="38">
 <rect x="18.5" y="1.5" width="17" height="35" rx="1" fill="#f6f8fd" stroke="#a4aed4" stroke-width="1.2"/>
 <path d="M18.5 10.2 H35.5 M18.5 19 H35.5 M18.5 27.8 H35.5" stroke="#a4aed4" stroke-width="1"/>
 <path d="M7.5 2.5 V15.5 M1 9 H14" stroke="#7fae48" stroke-width="5.4"/>
 <path d="M7.5 3.3 V14.7 M1.8 9 H13.2" stroke="#a8d46a" stroke-width="3.6"/>
</svg>
<!-- 15 sticky notes -->
<svg style="left:779px;top:108px" width="38" height="40">
 <g transform="rotate(-9 19 22)"><rect x="5" y="8" width="28" height="28" fill="#e9b85a" stroke="#c58a32" stroke-width="0.8"/></g>
 <g transform="rotate(14 19 20)">
  <rect x="4" y="5" width="29" height="29" fill="#f8d583" stroke="#d09a3c" stroke-width="0.8"/>
  <path d="M8 14 H28 M8 18 H28 M8 22 H24" stroke="#cfa24e" stroke-width="1" />
 </g>
 <circle cx="22.5" cy="10.6" r="3.2" fill="#d9434e" stroke="#a82a36" stroke-width="0.6"/>
 <circle cx="21.6" cy="9.7" r="1" fill="#f6a3a8"/>
</svg>
<!-- 16 download -->
<svg style="left:841px;top:109px" width="28" height="37">
 <path d="M8 1.5 H20 V14.5 H26.5 L14 29.5 L1.5 14.5 H8Z" fill="url(#gRf)" stroke="#86b552" stroke-width="1" stroke-linejoin="round"/>
 <rect x="1.5" y="31.5" width="25" height="4" rx="0.8" fill="#b2da7c" stroke="#86b552" stroke-width="0.9"/>
</svg>
<!-- 17 window x -->
<svg style="left:892px;top:109px" width="42" height="38">
 <rect x="1.2" y="1.2" width="37.6" height="32.6" rx="2.5" fill="url(#gWin)" stroke="#4f86c8" stroke-width="1.8"/>
 <path d="M1.2 7.5 V3.7 Q1.2 1.2 3.7 1.2 H36.3 Q38.8 1.2 38.8 3.7 V7.5Z" fill="#4f86c8"/>
 <circle cx="30.5" cy="28.5" r="9" fill="#ee7670"/>
 <path d="M26.3 24.3 L34.7 32.7 M34.7 24.3 L26.3 32.7" stroke="#fff" stroke-width="2.6" stroke-linecap="round"/>
</svg>
<!-- 18 windows x -->
<svg style="left:940px;top:107px" width="42" height="40">
 <rect x="9.2" y="1.2" width="31" height="29" rx="3" fill="#fff" stroke="#3f86cf" stroke-width="1.9"/>
 <path d="M9.2 6 V4.2 Q9.2 1.2 12.2 1.2 H37.2 Q40.2 1.2 40.2 4.2 V6Z" fill="#3f86cf"/>
 <rect x="1.2" y="8.2" width="33.6" height="28" rx="3" fill="url(#gWin)" stroke="#3f86cf" stroke-width="1.9"/>
 <path d="M1.2 12.6 V11.2 Q1.2 8.2 4.2 8.2 H31.8 Q34.8 8.2 34.8 11.2 V12.6Z" fill="#3f86cf"/>
 <circle cx="27" cy="30" r="9.2" fill="#f4736a"/>
 <path d="M22.7 25.7 L31.3 34.3 M31.3 25.7 L22.7 34.3" stroke="#fff" stroke-width="2.7" stroke-linecap="round"/>
</svg>
<!-- 19 lock -->
<svg style="left:1002px;top:107px" width="33" height="40">
 <path d="M6.5 19 V12 Q6.5 2.8 16.5 2.8 Q26.5 2.8 26.5 12 V19" fill="none" stroke="#8f949c" stroke-width="5.2"/>
 <path d="M6.5 19 V12 Q6.5 2.8 16.5 2.8 Q26.5 2.8 26.5 12 V19" fill="none" stroke="#d9dce0" stroke-width="2.6"/>
 <rect x="1.5" y="17.5" width="30" height="20.5" rx="2" fill="url(#gLock)" stroke="#c98832" stroke-width="1"/>
 <rect x="2.5" y="18.5" width="28" height="3" fill="#fdeabf" opacity="0.8"/>
 <circle cx="16.5" cy="25.5" r="2.6" fill="#3a3a3a"/><path d="M15 26 H18 L18.8 33 H14.2Z" fill="#3a3a3a"/>
</svg>
<!-- 20 gear -->
<svg style="left:1108px;top:108px" width="39" height="39" viewBox="-19.5 -19.5 39 39">
 <g fill="url(#gGear)" stroke="#9aa3b4" stroke-width="1">
 <path d="M-3.6 -18.6 H3.6 L4.6 -13.6 L8.2 -12 L12.4 -15 L17 -9.6 L13.6 -5.6 L14.6 -2.4 L18.8 -1 V6 L14 7 L12.4 10.2 L15 14.6 L9.4 18.6 L6 15 L2.6 15.8 L1.2 18.9 H-5 L-5.6 15 L-9 13.4 L-13 16 L-17.6 10.6 L-14.4 6.8 L-15.2 3.4 L-18.9 2 V-4.4 L-14.6 -5.6 L-13 -8.8 L-15.6 -13 L-10.4 -17 L-7 -13.6 L-4.2 -14.4Z" stroke-linejoin="round"/>
 </g>
 <circle cx="0" cy="0" r="6" fill="#fff" stroke="#9aa3b4" stroke-width="1"/>
</svg>
<!-- 21 pin -->
<svg style="left:1161px;top:108px" width="30" height="38">
 <ellipse cx="17" cy="34.5" rx="7" ry="2" fill="#000" opacity="0.12"/>
 <path d="M14.5 36 Q1.5 22 1.5 13.5 Q1.5 1.5 14.5 1.5 Q27.5 1.5 27.5 13.5 Q27.5 22 14.5 36Z" fill="url(#gLock)" stroke="#d99a3e" stroke-width="1"/>
 <circle cx="14.5" cy="13.5" r="5.2" fill="#fff" stroke="#d99a3e" stroke-width="1"/>
</svg>
<!-- 22 color wheel -->
<div class="a" style="left:1207px;top:110px;width:35px;height:35px;border-radius:50%;background:radial-gradient(circle at 50% 50%,#fff 0,#fff 10%,rgba(255,255,255,0.5) 36%,rgba(255,255,255,0) 66%),conic-gradient(from 0deg,#f5e650,#f5aa46,#f0508c,#b45ae0,#5a78f0,#3cc8e6,#46dc82,#aae646,#f5e650);box-shadow:0 1px 2px rgba(0,0,0,0.25)"></div>
<!-- 23 user key -->
<svg style="left:1264px;top:106px" width="39" height="41">
 <path d="M2 40 Q2 27 11 25 L17 31 L23 25 Q32 27 32 40Z" fill="#b33c44" stroke="#7f2228" stroke-width="0.8"/>
 <path d="M11.5 25.2 L17 40 L22.5 25.2 L17 30Z" fill="#f4f4f4" stroke="#bbb" stroke-width="0.5"/>
 <ellipse cx="17" cy="14.5" rx="8" ry="9.5" fill="#f0c8a0" stroke="#a8744a" stroke-width="0.8"/>
 <path d="M8.6 13.5 Q8 3 17 3 Q26 3 25.4 13.5 Q23 8 17 9 Q11 8 8.6 13.5Z" fill="#8a5228"/>
 <g transform="translate(30,29) rotate(40)"><circle cx="0" cy="-4" r="4.6" fill="#f5c45a" stroke="#c48a28" stroke-width="0.9"/><circle cx="0" cy="-5" r="1.5" fill="#fff"/><rect x="-1.6" y="0" width="3.2" height="11" fill="#f5c45a" stroke="#c48a28" stroke-width="0.8"/><rect x="1.6" y="6" width="2.6" height="2" fill="#f5c45a" stroke="#c48a28" stroke-width="0.6"/></g>
</svg>
<!-- 24 users -->
<svg style="left:1311px;top:109px" width="41" height="36">
 <g id="u1"><path d="M1 24 Q1 15.5 8 14.5 L11 17 L14 14.5 Q21 15.5 21 24Z" fill="#8cc152" stroke="#5c8c2e" stroke-width="0.7"/><ellipse cx="11" cy="8.5" rx="5.6" ry="6.6" fill="#f0c8a0" stroke="#a8744a" stroke-width="0.7"/><path d="M5.2 8 Q4.8 1 11 1 Q17.2 1 16.8 8 Q15 4.6 11 5.2 Q7 4.6 5.2 8Z" fill="#c47a3c"/></g>
 <use href="#u1" x="18" y="0"/>
 <use href="#u1" x="9" y="10"/>
</svg>
<!-- 25 info -->
<svg style="left:1370px;top:109px" width="37" height="37">
 <circle cx="18.5" cy="18.5" r="17.5" fill="#dfe6f6" stroke="#8fa4d6" stroke-width="1"/>
 <circle cx="18.5" cy="18.5" r="15" fill="url(#gBlueBall)" stroke="#4d70b8" stroke-width="0.8"/>
 <path d="M6 14 A13.5 13.5 0 0 1 31 14 Q18.5 19 6 14Z" fill="#fff" opacity="0.22"/>
 <circle cx="18.8" cy="10.6" r="2.7" fill="#fff"/>
 <path d="M14.6 15.6 H21.2 V25.6 H23.4 V27.8 H14.2 V25.6 H16.6 V17.8 H14.6Z" fill="#fff"/>
</svg>

<!-- TOOLBAR 2 icons -->
<!-- report -->
<svg style="left:360px;top:166px" width="31" height="38">
 <rect x="0.5" y="0.5" width="29.5" height="36.5" rx="1" fill="#f5f8fd" stroke="#a9b4d6" stroke-width="1"/>
 <rect x="4.5" y="4.5" width="21" height="6" fill="#7fb0e6" stroke="#5a8ccc" stroke-width="0.8"/>
 <path d="M4.5 15 H13 M4.5 18.5 H13 M4.5 22 H13 M4.5 25.5 H13 M4.5 29 H13 M4.5 32.5 H13" stroke="#8fa4d0" stroke-width="1.3"/>
 <rect x="14.5" y="21.5" width="5" height="12" fill="#5aa0dc" stroke="#3f78b4" stroke-width="0.7"/>
 <rect x="20.5" y="15.5" width="5" height="18" fill="#f08c3c" stroke="#c46a22" stroke-width="0.7"/>
</svg>
<!-- green arrow -->
<svg style="left:469px;top:169px" width="35" height="35">
 <circle cx="17.5" cy="17.5" r="16.8" fill="url(#gGreen)" stroke="#6a9a3a" stroke-width="1"/>
 <path d="M4 13 A14.5 14.5 0 0 1 31 13 Q17.5 18 4 13Z" fill="#fff" opacity="0.18"/>
 <path d="M8.5 13.6 H17.5 V8.2 L27.5 17.5 L17.5 26.8 V21.4 H8.5Z" fill="#fff" stroke="#5b8c2c" stroke-width="0.9" stroke-linejoin="round"/>
</svg>
<!-- clock -->
<svg style="left:574px;top:167px" width="38" height="38">
 <circle cx="18.8" cy="18.6" r="16.6" fill="#f6f7f9" stroke="url(#gRedRing)" stroke-width="3.6"/>
 <circle cx="18.8" cy="18.6" r="18.2" fill="none" stroke="#b8403e" stroke-width="0.6" opacity="0.7"/>
 <circle cx="18.8" cy="18.6" r="14.6" fill="none" stroke="#d9dbe0" stroke-width="0.8"/>
 <g fill="#9aa2b0"><circle cx="18.8" cy="6.4" r="0.7"/><circle cx="18.8" cy="30.8" r="0.7"/><circle cx="6.6" cy="18.6" r="0.7"/><circle cx="31" cy="18.6" r="0.7"/><circle cx="12.7" cy="8" r="0.6"/><circle cx="24.9" cy="8" r="0.6"/><circle cx="8.2" cy="12.5" r="0.6"/><circle cx="29.4" cy="12.5" r="0.6"/><circle cx="8.2" cy="24.7" r="0.6"/><circle cx="29.4" cy="24.7" r="0.6"/><circle cx="12.7" cy="29.2" r="0.6"/><circle cx="24.9" cy="29.2" r="0.6"/></g>
 <path d="M18.8 18.6 L26 10.4" stroke="#7d8797" stroke-width="1.6" stroke-linecap="round"/>
 <path d="M18.8 18.6 V30" stroke="#8a94a6" stroke-width="1.5" stroke-linecap="round"/>
 <path d="M7 18.3 H18.8" stroke="#d9463e" stroke-width="1.4"/>
 <circle cx="18.8" cy="18.6" r="1.6" fill="#5a6270"/>
</svg>
</body></html>
